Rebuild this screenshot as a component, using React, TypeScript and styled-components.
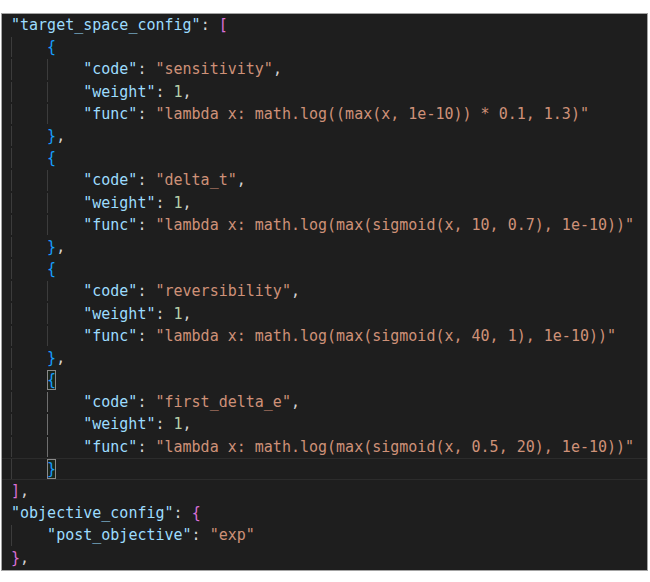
import React from "react";
import styled, { createGlobalStyle } from "styled-components";

const Global = createGlobalStyle`
  html, body { margin: 0; padding: 0; background: #ffffff; }
  #root { width: 650px; height: 582px; }
`;

const Page = styled.div`
  width: 650px;
  height: 582px;
  padding: 13px 2px 0 1px;
  box-sizing: border-box;
  background: #ffffff;
`;

const Editor = styled.div`
  width: 647px;
  height: 558px;
  box-sizing: border-box;
  border: 1px solid #a3a3a3;
  background: #1e1e1e;
  padding: 0 0 0 9px;
  overflow: hidden;
  display: flex;
  flex-direction: column;
  font-family: "DejaVu Sans Mono", "Liberation Mono", monospace;
  font-size: 15px;
  color: #d4d4d4;
  white-space: pre;
`;

const Line = styled.div<{ $current?: boolean }>`
  display: flex;
  align-items: center;
  height: 22.2px;
  flex: none;
  box-sizing: border-box;
  margin-left: -9px;
  padding-left: 9px;
  border-top: 1px solid ${(p) => (p.$current ? "#2c2c2c" : "transparent")};
  border-bottom: 1px solid ${(p) => (p.$current ? "#2c2c2c" : "transparent")};
`;

const Indent = styled.span<{ $active?: boolean }>`
  display: inline-block;
  width: 4ch;
  height: 100%;
  flex: none;
  box-sizing: border-box;
  border-left: 1px solid ${(p) => (p.$active ? "#6f6f6f" : "#3c3c3c")};
`;

const Tok = styled.span<{ $c: string; $box?: boolean }>`
  color: ${(p) => p.$c};
  ${(p) =>
    p.$box
      ? `outline: 1px solid #8a8a8a; outline-offset: -1px; background: rgba(0,100,0,0.1); padding: 1px 0;`
      : ""}
`;

const C = {
  key: "#9cdcfe",
  str: "#ce9178",
  num: "#b5cea8",
  punc: "#d4d4d4",
  gold: "#ffd700",
  orchid: "#da70d6",
  blue: "#179fff",
};

type T = { text: string; c: string; box?: boolean };
type L = { indent: number; active?: number; current?: boolean; toks: T[] };

const k = (text: string): T => ({ text, c: C.key });
const s = (text: string): T => ({ text, c: C.str });
const n = (text: string): T => ({ text, c: C.num });
const p = (text: string): T => ({ text, c: C.punc });
const b = (text: string, c: string, box?: boolean): T => ({ text, c, box });

const block = (code: string, func: string, box = false, cur = false): L[] => [
  { indent: 1, toks: [b("{", C.blue, box)] },
  { indent: 2, active: box ? 1 : undefined, toks: [k('"code"'), p(": "), s(`"${code}"`), p(",")] },
  { indent: 2, active: box ? 1 : undefined, toks: [k('"weight"'), p(": "), n("1"), p(",")] },
  { indent: 2, active: box ? 1 : undefined, toks: [k('"func"'), p(": "), s(`"${func}"`)] },
  box
    ? { indent: 1, current: cur, toks: [b("}", C.blue, true)] }
    : { indent: 1, toks: [b("}", C.blue), p(",")] },
];

const lines: L[] = [
  { indent: 0, toks: [k('"target_space_config"'), p(": "), b("[", C.orchid)] },
  ...block("sensitivity", "lambda x: math.log((max(x, 1e-10)) * 0.1, 1.3)"),
  ...block("delta_t", "lambda x: math.log(max(sigmoid(x, 10, 0.7), 1e-10))"),
  ...block("reversibility", "lambda x: math.log(max(sigmoid(x, 40, 1), 1e-10))"),
  ...block("first_delta_e", "lambda x: math.log(max(sigmoid(x, 0.5, 20), 1e-10))", true, true),
  { indent: 0, toks: [b("]", C.orchid), p(",")] },
  { indent: 0, toks: [k('"objective_config"'), p(": "), b("{", C.orchid)] },
  { indent: 1, toks: [k('"post_objective"'), p(": "), s('"exp"')] },
  { indent: 0, toks: [b("}", C.orchid), p(",")] },
];

export default function App() {
  return (
    <Page>
      <Global />
      <Editor>
        {lines.map((l, i) => (
          <Line key={i} $current={l.current}>
            {Array.from({ length: l.indent }).map((_, j) => (
              <Indent key={j} $active={l.active === j} />
            ))}
            {l.toks.map((t, j) => (
              <Tok key={j} $c={t.c} $box={t.box}>
                {t.text}
              </Tok>
            ))}
          </Line>
        ))}
      </Editor>
    </Page>
  );
}
